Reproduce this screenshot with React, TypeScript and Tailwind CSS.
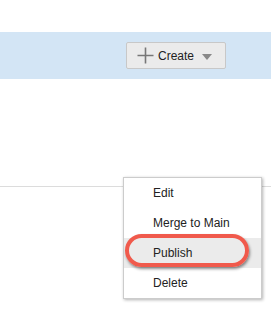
import React from "react";

export default function App() {
  const items = ["Edit", "Merge to Main", "Publish", "Delete"];
  return (
    <div className="relative w-[271px] h-[312px] bg-white overflow-hidden" style={{ fontFamily: '"Liberation Sans", Arial, sans-serif' }}>
      <div className="h-[32px]" />
      <div className="h-[47px] bg-[#d3e5f5] flex items-center justify-end pr-[45px]">
        <button className="w-[100px] h-[27px] bg-[#ebebeb] border border-[#c8c8c8] rounded-[2px] flex items-center pl-[10px] text-[12px] text-[#222]">
          <svg width="17" height="17" viewBox="0 0 17 17" className="mr-[4px]">
            <path d="M8.5 0.5V16.5M0.5 8.5H16.5" stroke="#777" strokeWidth="1.6" />
          </svg>
          <span>Create</span>
          <svg width="10" height="6" viewBox="0 0 10 6" className="ml-[8px] mt-[2px]">
            <path d="M0 0H10L5 6Z" fill="#888" />
          </svg>
        </button>
      </div>
      <div className="h-[107px]" />
      <div className="h-px bg-[#dcdcdc]" />

      <div className="absolute left-[123px] top-[177px] w-[139px] bg-white border border-[#cccccc] shadow-[1px_1px_3px_rgba(0,0,0,0.3)]">
        {items.map((t) => (
          <div
            key={t}
            className={`h-[30px] flex items-center pl-[29px] text-[12px] text-[#222] ${t === "Publish" ? "bg-[#ebebeb]" : ""}`}
          >
            {t}
          </div>
        ))}
      </div>
      <div className="absolute left-[125px] top-[234px] w-[124px] h-[33px] rounded-full border-[4px] border-[#f05a4c] shadow-[1px_2px_3px_rgba(0,0,0,0.45)]" />
    </div>
  );
}
